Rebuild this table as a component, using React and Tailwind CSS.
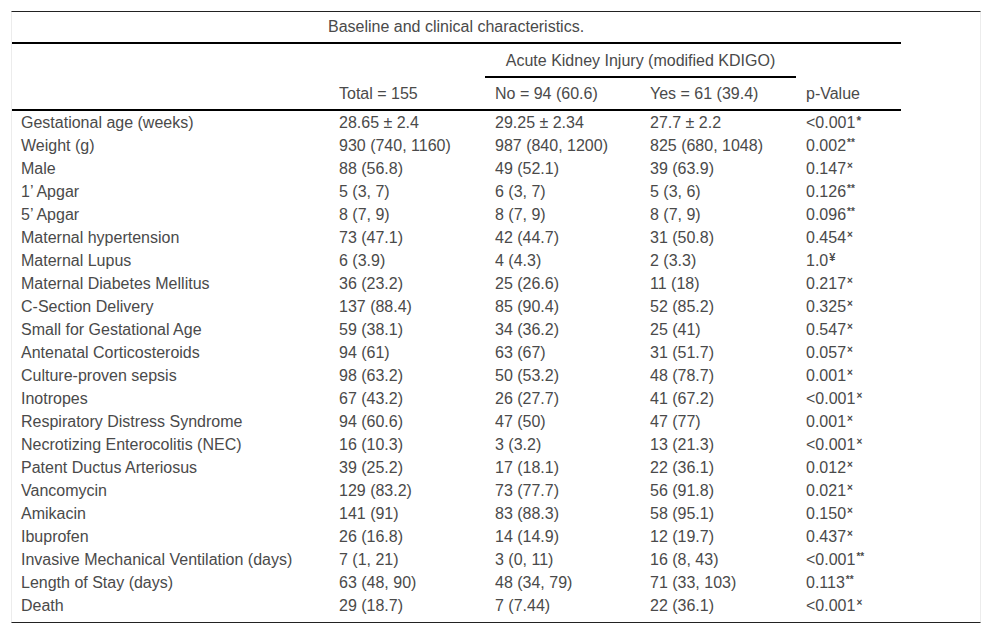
const ROWS = [
  ['Gestational age (weeks)', '28.65 ± 2.4', '29.25 ± 2.34', '27.7 ± 2.2', '<0.001', '*'],
  ['Weight (g)', '930 (740, 1160)', '987 (840, 1200)', '825 (680, 1048)', '0.002', '**'],
  ['Male', '88 (56.8)', '49 (52.1)', '39 (63.9)', '0.147', 'x'],
  ['1’ Apgar', '5 (3, 7)', '6 (3, 7)', '5 (3, 6)', '0.126', '**'],
  ['5’ Apgar', '8 (7, 9)', '8 (7, 9)', '8 (7, 9)', '0.096', '**'],
  ['Maternal hypertension', '73 (47.1)', '42 (44.7)', '31 (50.8)', '0.454', 'x'],
  ['Maternal Lupus', '6 (3.9)', '4 (4.3)', '2 (3.3)', '1.0', '¥'],
  ['Maternal Diabetes Mellitus', '36 (23.2)', '25 (26.6)', '11 (18)', '0.217', 'x'],
  ['C-Section Delivery', '137 (88.4)', '85 (90.4)', '52 (85.2)', '0.325', 'x'],
  ['Small for Gestational Age', '59 (38.1)', '34 (36.2)', '25 (41)', '0.547', 'x'],
  ['Antenatal Corticosteroids', '94 (61)', '63 (67)', '31 (51.7)', '0.057', 'x'],
  ['Culture-proven sepsis', '98 (63.2)', '50 (53.2)', '48 (78.7)', '0.001', 'x'],
  ['Inotropes', '67 (43.2)', '26 (27.7)', '41 (67.2)', '<0.001', 'x'],
  ['Respiratory Distress Syndrome', '94 (60.6)', '47 (50)', '47 (77)', '0.001', 'x'],
  ['Necrotizing Enterocolitis (NEC)', '16 (10.3)', '3 (3.2)', '13 (21.3)', '<0.001', 'x'],
  ['Patent Ductus Arteriosus', '39 (25.2)', '17 (18.1)', '22 (36.1)', '0.012', 'x'],
  ['Vancomycin', '129 (83.2)', '73 (77.7)', '56 (91.8)', '0.021', 'x'],
  ['Amikacin', '141 (91)', '83 (88.3)', '58 (95.1)', '0.150', 'x'],
  ['Ibuprofen', '26 (16.8)', '14 (14.9)', '12 (19.7)', '0.437', 'x'],
  ['Invasive Mechanical Ventilation (days)', '7 (1, 21)', '3 (0, 11)', '16 (8, 43)', '<0.001', '**'],
  ['Length of Stay (days)', '63 (48, 90)', '48 (34, 79)', '71 (33, 103)', '0.113', '**'],
  ['Death', '29 (18.7)', '7 (7.44)', '22 (36.1)', '<0.001', 'x'],
]

// footnote marks sit up at cap height
function Mark({ m }) {
  if (m === 'x') return <span className="inline-block align-top text-[10px] leading-[10px] font-bold mt-[4px] ml-[1px]">×</span>
  if (m === '¥') return <span className="inline-block align-top text-[11px] leading-[11px] font-bold mt-[3px] ml-[1px]">¥</span>
  if (m === '*') return <span className="inline-block align-top text-[12px] leading-[12px] font-bold mt-[4px] ml-[1px]">*</span>
  return <span className="inline-block align-top text-[10px] leading-[10px] font-bold mt-[4px] ml-[1px]">{m}</span>
}

const COLS = 'grid grid-cols-[317px_156px_155px_156px_105px]'

export default function App() {
  return (
    <div className="min-h-screen bg-white p-[11px] text-[16px] text-[#4a4a4a] font-['Liberation_Sans',Arial,sans-serif]">
      <div className="w-[970px] border-t border-b border-t-[#222] border-b-[#222] border-x border-x-[#ececec] pb-[5px]">
        <div className="w-[889px]">
          <div className="h-[32px] border-b-2 border-black pl-[316px] flex items-center">
            Baseline and clinical characteristics.
          </div>

          <div className={`${COLS} h-[34px]`}>
            <div className="col-span-2" />
            <div className="col-span-2 border-b-2 border-black flex items-end justify-center pb-[5px] leading-[20px]">
              Acute Kidney Injury (modified KDIGO)
            </div>
            <div />
          </div>

          <div className={`${COLS} h-[33px] border-b-2 border-black items-center`}>
            <div className="pl-[9px]" />
            <div className="pl-[10px]">Total = 155</div>
            <div className="pl-[10px]">No = 94 (60.6)</div>
            <div className="pl-[10px]">Yes = 61 (39.4)</div>
            <div className="pl-[10px]">p-Value</div>
          </div>

          {ROWS.map((r) => (
            <div key={r[0]} className={`${COLS} h-[23px] items-center leading-[23px]`}>
              <div className="pl-[9px] whitespace-nowrap">{r[0]}</div>
              <div className="pl-[10px] whitespace-nowrap">{r[1]}</div>
              <div className="pl-[10px] whitespace-nowrap">{r[2]}</div>
              <div className="pl-[10px] whitespace-nowrap">{r[3]}</div>
              <div className="pl-[10px] whitespace-nowrap">
                {r[4]}
                <Mark m={r[5]} />
              </div>
            </div>
          ))}
        </div>
      </div>
    </div>
  )
}
